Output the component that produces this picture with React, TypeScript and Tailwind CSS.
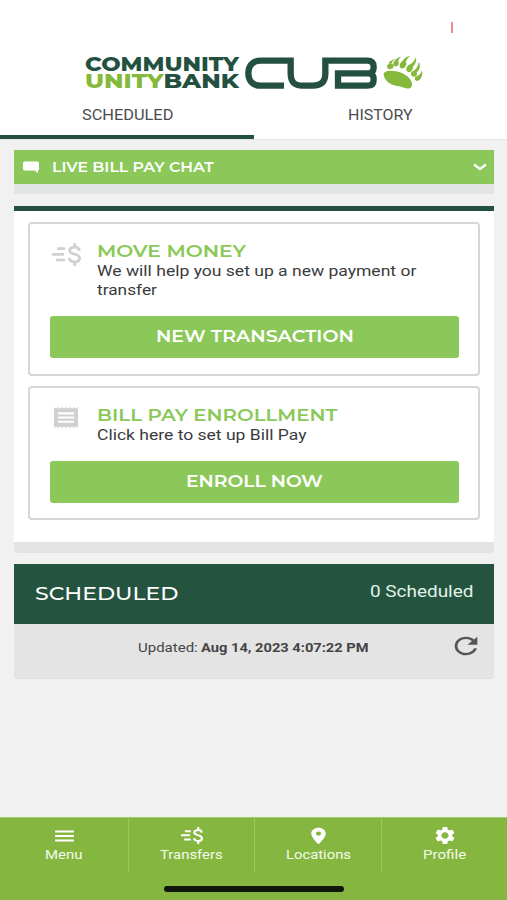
import { useLayoutEffect, useRef, useState } from "react";
import type { ReactNode } from "react";

/** A single line of text stretched horizontally to an exact width. */
function Fit({ w, className = "", children }: { w: number; className?: string; children: ReactNode }) {
  const ref = useRef<HTMLSpanElement>(null);
  const [scale, setScale] = useState(1);
  useLayoutEffect(() => {
    if (ref.current) setScale(w / ref.current.offsetWidth);
  }, [w]);
  return (
    <span className={`block shrink-0 whitespace-nowrap text-left ${className}`} style={{ width: w }}>
      <span ref={ref} className="inline-block origin-left" style={{ transform: `scaleX(${scale})` }}>
        {children}
      </span>
    </span>
  );
}

const display = "font-['Montserrat','Lato',sans-serif]";

function Logo() {
  return (
    <div className="flex h-[41px] items-start pl-[85px]">
      <div className="w-[154px] font-['Montserrat','Inter',sans-serif] text-[20px] font-extrabold leading-[17px] text-[#24513f]">
        <Fit w={154}>COMMUNITY</Fit>
        <Fit w={154}>
          <span className="text-[#84b93c]">UNITY</span>BANK
        </Fit>
      </div>
      <svg className="ml-[6px] mt-px h-[32px] w-[133px]" viewBox="31 49 399 96" fill="none" stroke="#24513f" strokeWidth="19">
        <path d="M148 135H78C54 135 41 120 41 98S54 60 78 60H168V98C168 123 178 135 204 135H234C260 135 272 123 272 98V60H398Q417 60 417 79Q417 98 402 98H310V135H398Q417 135 417 117Q417 98 402 98" />
      </svg>
      <svg className="ml-[5px] mt-[-1px] h-[34px] w-[42px]" viewBox="446 46 126 102" fill="#84b93c">
        <path d="M448 106C447 96 460 92 476 94C498 96 516 104 526 117C535 128 536 141 526 146C515 149 505 142 494 140C476 138 452 128 448 106Z" />
        <ellipse cx="468" cy="80" rx="10" ry="8" transform="rotate(-20 468 80)" />
        <ellipse cx="485" cy="71" rx="8" ry="9" transform="rotate(30 485 71)" />
        <ellipse cx="506" cy="75" rx="9" ry="12" transform="rotate(30 506 75)" />
        <ellipse cx="526" cy="86" rx="9" ry="12" transform="rotate(30 526 86)" />
        <ellipse cx="539" cy="102" rx="9" ry="9" />
        <ellipse cx="550" cy="116" rx="9" ry="7" transform="rotate(-30 550 116)" />
        <path d="M462 71Q470 60 483 59Q474 63 470 73ZM481 63Q488 52 500 51Q493 56 491 66ZM505 64Q512 50 528 49Q518 54 514 67ZM527 75Q540 67 544 53Q550 70 534 81ZM538 93Q551 84 553 66Q563 82 548 98ZM549 110Q562 102 562 92Q568 106 557 117Z" />
      </svg>
    </div>
  );
}

function MoneyIcon({ className }: { className: string }) {
  return (
    <svg className={className} viewBox="0 0 28 23" preserveAspectRatio="none" fill="none" stroke="currentColor" strokeWidth="2.7">
      <path d="M5 5.700H12.500M0 11.300H11.500M4 17H12.500" />
      <path d="M26.500 7.700C26.100 5.300 24.700 4.100 22 4.100C18.800 4.100 17 5.500 17 7.600C17 9.800 19 10.600 22.100 11.300C25.400 12.100 26.600 13 26.600 15.200C26.600 17.500 25 18.900 22.100 18.900C18.900 18.900 16.900 17.400 16.600 15M22 0V4M22 19V23" />
    </svg>
  );
}

function Glyph({ d, className }: { d: string; className: string }) {
  return (
    <svg className={className} viewBox="0 0 24 24" preserveAspectRatio="none" fill="currentColor">
      <path d={d} />
    </svg>
  );
}

const glyphs = {
  receipt: "M18 17H6v-2h12v2zm0-4H6v-2h12v2zm0-4H6V7h12v2zM3 22l1.500-1.500L6 22l1.500-1.500L9 22l1.500-1.500L12 22l1.500-1.500L15 22l1.500-1.500L18 22l1.500-1.500L21 22V2l-1.500 1.500L18 2l-1.500 1.500L15 2l-1.500 1.500L12 2l-1.500 1.500L9 2 7.500 3.500 6 2 4.500 3.500 3 2v20z",
  refresh: "M17.650 6.350C16.200 4.900 14.210 4 12 4c-4.420 0-7.990 3.580-7.990 8s3.570 8 7.990 8c3.730 0 6.840-2.550 7.730-6h-2.080c-.82 2.330-3.040 4-5.650 4-3.310 0-6-2.690-6-6s2.690-6 6-6c1.660 0 3.140.69 4.220 1.780L13 11h7V4l-2.350 2.350z",
  menu: "M3 18h18v-2.300H3v2.300zm0-4.850h18v-2.300H3v2.300zm0-7.150v2.300h18V6H3z",
  pin: "M12 2C8.130 2 5 5.130 5 9c0 5.250 7 13 7 13s7-7.750 7-13c0-3.870-3.130-7-7-7zm0 9.500c-1.380 0-2.500-1.120-2.500-2.500s1.120-2.500 2.500-2.500 2.500 1.120 2.500 2.500-1.120 2.500-2.500 2.500z",
  gear: "M19.140 12.940c.04-.3.06-.61.06-.94 0-.32-.02-.64-.07-.94l2.030-1.580c.18-.14.23-.41.12-.61l-1.920-3.320c-.12-.22-.37-.29-.59-.22l-2.390.96c-.5-.38-1.030-.7-1.620-.94l-.36-2.540c-.04-.24-.24-.41-.48-.41h-3.840c-.24 0-.43.17-.47.41l-.36 2.540c-.59.24-1.130.57-1.620.94l-2.390-.96c-.22-.08-.47 0-.59.22L2.740 8.870c-.12.21-.08.47.12.61l2.030 1.580c-.05.3-.09.63-.09.94s.02.64.07.94l-2.030 1.580c-.18.14-.23.41-.12.61l1.920 3.320c.12.22.37.29.59.22l2.390-.96c.5.38 1.030.7 1.620.94l.36 2.540c.05.24.24.41.48.41h3.840c.24 0 .44-.17.47-.41l.36-2.540c.59-.24 1.130-.56 1.620-.94l2.390.96c.22.08.47 0 .59-.22l1.920-3.320c.12-.22.07-.47-.12-.61l-2.010-1.580zM12 15.600c-1.980 0-3.600-1.620-3.600-3.600s1.620-3.600 3.600-3.600 3.600 1.620 3.600 3.600-1.620 3.600-3.600 3.600z",
};

function ActionCard({
  icon, title, titleWidth, lines, action, actionWidth, className,
}: {
  icon: ReactNode; title: string; titleWidth: number; lines: { text: string; w: number }[];
  action: string; actionWidth: number; className: string;
}) {
  return (
    <section className={`flex flex-col rounded-[4px] border-2 border-[#d6d6d7] px-[20px] pt-[18px] ${className}`}>
      <div className="flex">
        <div className="w-[47px] shrink-0">{icon}</div>
        <div>
          <h2 className={`${display} text-[16px] font-semibold leading-[20px] text-[#8ac858]`}>
            <Fit w={titleWidth}>{title}</Fit>
          </h2>
          <div className="text-[15px] leading-[19px] text-[#3b3b3d]">
            {lines.map((l) => (
              <Fit key={l.text} w={l.w}>{l.text}</Fit>
            ))}
          </div>
        </div>
      </div>
      <button className={`${display} mt-[16px] flex h-[42px] w-[409px] items-center justify-center rounded-[3px] bg-[#8cc859] text-[16px] font-semibold text-white`}>
        <Fit w={actionWidth}>{action}</Fit>
      </button>
    </section>
  );
}

const navItems = [
  { label: "Menu", w: 38, icon: <Glyph d={glyphs.menu} className="h-[22px] w-[25px]" /> },
  { label: "Transfers", w: 63, icon: <MoneyIcon className="h-[17px] w-[22px]" /> },
  { label: "Locations", w: 65, icon: <Glyph d={glyphs.pin} className="h-[20px] w-[25px]" /> },
  { label: "Profile", w: 43, icon: <Glyph d={glyphs.gear} className="h-[21px] w-[24px]" /> },
];

export default function App() {
  return (
    <div className="flex h-[900px] w-[507px] flex-col overflow-hidden bg-[#f1f1f1] font-['Roboto',sans-serif]">
      <header className="flex h-[140px] shrink-0 flex-col border-b border-[#e3e3e3] bg-white">
        <div className="flex h-[56px] shrink-0 justify-end pr-[54px] pt-[22px]">
          <div className="h-[11px] w-[2px] bg-[#f28b86]" />
        </div>
        <Logo />
        <nav className="flex h-[43px] text-[14px] leading-[38px] text-[#4c4c4e]">
          <div className="flex h-[43px] w-[254px] justify-center border-b-4 border-[#24513f]">
            <Fit w={91}>SCHEDULED</Fit>
          </div>
          <div className="flex w-[253px] justify-center">
            <Fit w={65}>HISTORY</Fit>
          </div>
        </nav>
      </header>

      <main className="flex flex-1 flex-col pl-[14px] pr-[13px] pt-[10px]">
        <div className="h-[44px] shrink-0 bg-[#e3e4e4]">
          <div className={`${display} flex h-[34px] items-center bg-[#8cc859] pl-[9px] pr-[7px] text-[14px] font-semibold text-white`}>
            <svg className="h-[12px] w-[16px]" viewBox="0 0 16 12" fill="currentColor">
              <path d="M1.500 0.500H14.500Q16 0.500 16 2V8.500Q16 9.500 15 9.500V12L11.500 9.500H1.500Q0 9.500 0 8V2Q0 0.500 1.500 0.500Z" />
            </svg>
            <Fit w={162} className="ml-[13px]">LIVE BILL PAY CHAT</Fit>
            <svg className="ml-auto h-[8px] w-[14px]" viewBox="0 0 14 8" fill="none" stroke="currentColor" strokeWidth="2.300">
              <path d="M1 1.500L7 6L13 1.500" />
            </svg>
          </div>
        </div>

        <div className="mt-[12px] h-[347px] shrink-0 rounded-b-[4px] bg-[#e3e3e3]">
          <div className="flex h-[336px] flex-col border-t-[5px] border-[#24513f] bg-white px-[14px] pt-[11px]">
            <ActionCard
              className="h-[154px]"
              icon={<MoneyIcon className="ml-[2px] mt-px h-[23px] w-[29px] text-[#d0d0d1]" />}
              title="MOVE MONEY"
              titleWidth={149}
              lines={[
                { text: "We will help you set up a new payment or", w: 319 },
                { text: "transfer", w: 60 },
              ]}
              action="NEW TRANSACTION"
              actionWidth={198}
            />
            <ActionCard
              className="mt-[10px] h-[134px]"
              icon={<Glyph d={glyphs.receipt} className="mt-[-1px] h-[25px] w-[32px] text-[#d0d0d1]" />}
              title="BILL PAY ENROLLMENT"
              titleWidth={241}
              lines={[{ text: "Click here to set up Bill Pay", w: 209 }]}
              action="ENROLL NOW"
              actionWidth={137}
            />
          </div>
        </div>

        <section className="mt-[11px] h-[115px] shrink-0 overflow-hidden rounded-b-[4px] border-b border-[#dcdcdc] bg-[#e4e4e4]">
          <div className="flex h-[60px] justify-between bg-[#24543f] pl-[21px] pr-[21px] text-white">
            <h2 className={`${display} text-[18px] font-medium leading-[60px]`}>
              <Fit w={143}>SCHEDULED</Fit>
            </h2>
            <Fit w={103} className="text-[16px] leading-[55px] text-[#e2f3e8]">0 Scheduled</Fit>
          </div>
          <div className="flex items-start pl-[124px] pr-[11px]">
            <div className="flex gap-[3px] text-[13px] leading-[47px] text-[#444446]">
              <Fit w={60}>Updated:</Fit>
              <Fit w={168} className="font-bold">Aug 14, 2023 4:07:22 PM</Fit>
            </div>
            <Glyph d={glyphs.refresh} className="ml-auto mt-[8px] h-[28px] w-[34px] text-[#555557]" />
          </div>
        </section>
      </main>

      <footer className="flex h-[83px] shrink-0 flex-col border-t border-[#a4cd6d] bg-[#85b640] text-white">
        <div className="grid h-[55px] grid-cols-[129px_126px_127px_125px]">
          {navItems.map((item, i) => (
            <div key={item.label} className={`flex flex-col items-center pt-[7px] ${i < 3 ? "border-r border-[#9dc965]" : ""}`}>
              <div className="flex h-[21px] items-center">{item.icon}</div>
              <Fit w={item.w} className="text-[13px] leading-[17px] text-[#f3fae8]">{item.label}</Fit>
            </div>
          ))}
        </div>
        <div className="ml-[164px] mt-[13px] h-[6px] w-[180px] rounded-full bg-[#11160b]" />
      </footer>
    </div>
  );
}
